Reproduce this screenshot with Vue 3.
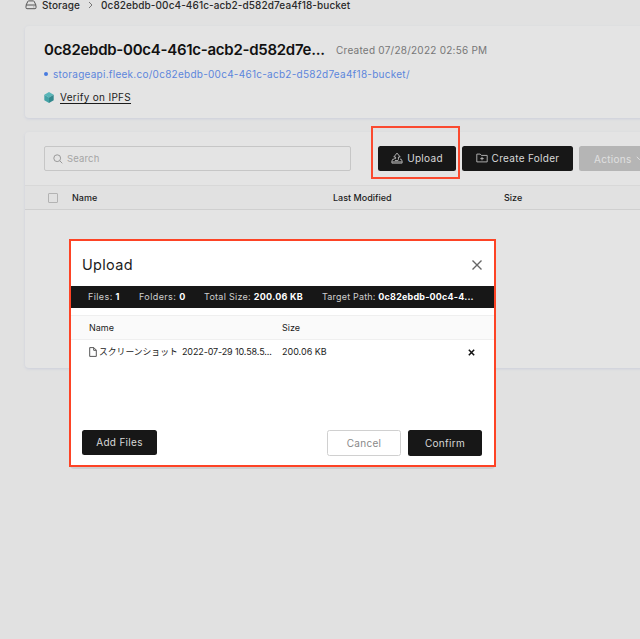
<script setup>
const bucket = '0c82ebdb-00c4-461c-acb2-d582d7ea4f18-bucket'
const stats = [
  { label: 'Files:', value: '1', cls: 'files' },
  { label: 'Folders:', value: '0', cls: 'folders' },
  { label: 'Total Size:', value: '200.06 KB', cls: 'total' },
  { label: 'Target Path:', value: '0c82ebdb-00c4-4...', cls: 'target' },
]
const files = [{ name: 'スクリーンショット', stamp: '2022-07-29 10.58.5...', size: '200.06 KB' }]
</script>

<template>
  <div class="page">
    <nav class="crumbs">
      <svg class="drive" viewBox="0 0 12 10"><path d="M1 5.2 2.9 1.3Q3.1.9 3.6.9h4.8q.5 0 .7.4L11 5.2M2 5h8q1 0 1 1v1.7q0 1-1 1H2q-1 0-1-1V6q0-1 1-1ZM8.6 6.9h.6" /></svg>
      <span class="storage">Storage</span>
      <svg class="sep" viewBox="0 0 5 8"><path d="m1 1 3 3-3 3" /></svg>
      <span class="crumb-name">{{ bucket }}</span>
    </nav>

    <section class="card info">
      <div class="title-row">
        <h1>0c82ebdb-00c4-461c-acb2-d582d7e...</h1>
        <span class="created">Created 07/28/2022 02:56 PM</span>
      </div>
      <div class="url-row"><i class="dot"></i><a class="url">storageapi.fleek.co/{{ bucket }}/</a></div>
      <div class="verify-row">
        <svg class="cube" viewBox="0 0 10 11">
          <path fill="#58b5b8" d="M5 0 9.7 2.7 5 5.4.3 2.7Z" />
          <path fill="#43a2a6" d="M.3 2.7 5 5.4V11L.3 8.2Z" />
          <path fill="#32888d" d="M9.7 2.7 5 5.4V11l4.7-2.8Z" />
        </svg>
        <a class="verify">Verify on IPFS</a>
      </div>
    </section>

    <section class="card listing">
      <div class="toolbar">
        <div class="search">
          <svg viewBox="0 0 10 10"><circle cx="4.2" cy="4.2" r="3.4" /><path d="m6.7 6.7 2.6 2.6" /></svg>
          <span>Search</span>
        </div>
        <button class="btn upload">
          <svg viewBox="0 0 12 12"><path d="M4.6 5H2.8L6 1.1 9.2 5H7.4v2.6q0 1-1.2 1H3.9M4.6 5v1.7H3.2M3 7.2H1.8L.9 9v2.1h10.2V9l-.9-1.8H9M1.2 9.9h9.6" /></svg>
          <span>Upload</span>
        </button>
        <button class="btn create">
          <svg viewBox="0 0 12 10"><path d="M.8 8.9V1.1h3.4l1.2 1.3h5.8v6.5ZM6 3.9v3.4M4.3 5.6h3.4" /></svg>
          <span>Create Folder</span>
        </button>
        <button class="btn actions">
          <span>Actions</span>
          <svg viewBox="0 0 7 5"><path d="m.8.8 2.7 2.8L6.2.8" /></svg>
        </button>
      </div>
      <div class="thead">
        <i class="check"></i>
        <span class="c-name">Name</span>
        <span class="c-mod">Last Modified</span>
        <span class="c-size">Size</span>
      </div>
    </section>

    <div class="mark"></div>

    <div class="modal-shadow"></div>
    <div class="modal">
      <header>
        <h2>Upload</h2>
        <svg viewBox="0 0 10 10"><path d="m.5.5 9 9M9.5.5l-9 9" /></svg>
      </header>
      <div class="stats">
        <span v-for="s in stats" :key="s.cls" :class="s.cls">{{ s.label }} <b>{{ s.value }}</b></span>
      </div>
      <div class="mhead"><span class="m-name">Name</span><span class="m-size">Size</span></div>
      <div v-for="f in files" :key="f.name" class="mrow">
        <div class="m-file">
          <svg viewBox="0 0 8 10"><path d="M.7.6h4.1l2.5 2.5v6.3H.7ZM4.7.8v2.5h2.5" /></svg>
          <span class="jp">{{ f.name }}</span>
          <span class="stamp">{{ f.stamp }}</span>
        </div>
        <span class="m-kb">{{ f.size }}</span>
        <svg class="remove" viewBox="0 0 6 6"><path d="m.7.7 4.6 4.6M5.3.7.7 5.3" /></svg>
      </div>
      <footer>
        <button class="btn add">Add Files</button>
        <button class="btn cancel">Cancel</button>
        <button class="btn confirm">Confirm</button>
      </footer>
    </div>
  </div>
</template>

<style>
body { background: #e1e1e1; }
</style>

<style scoped>
* { box-sizing: border-box; }
.page {
  position: relative;
  width: 640px;
  height: 639px;
  overflow: hidden;
  background: #e1e1e1;
  color: #1c1c1c;
  font-family: Inter, "Noto Sans CJK JP", sans-serif;
  font-size: 9.5px;
  line-height: 12px;
  white-space: nowrap;
}
svg { display: block; flex: none; fill: none; stroke: currentColor; }
.crumbs { display: flex; align-items: center; height: 10px; padding-left: 25px; font-size: 10px; font-weight: 500; color: #2a2a2a; }
.drive { width: 12px; height: 10px; margin-right: 5px; color: #555; }
.storage { width: 46px; letter-spacing: 0.1px; }
.sep { width: 5px; height: 8px; margin-right: 8px; color: #777; }
.crumb-name { letter-spacing: 0.09px; }
.card { width: 640px; margin-left: 25px; background: #e4e4e4; border-radius: 4px; box-shadow: 0 1px 3px #ccd0dc; }
.info { height: 92px; margin-top: 16px; padding: 14px 0 0 19px; }
.title-row { display: flex; align-items: center; height: 20px; }
h1 { width: 292px; margin: 0; font-size: 15px; font-weight: 600; letter-spacing: -0.27px; color: #111; }
.created { font-size: 10px; letter-spacing: 0.24px; color: #777; }
.url-row { display: flex; align-items: center; height: 14px; margin-top: 7px; color: #5c86dc; font-size: 10px; letter-spacing: 0.26px; }
.dot { width: 4px; height: 4px; margin-right: 5px; border-radius: 50%; background: #477be0; }
.verify-row { display: flex; align-items: center; height: 14px; margin-top: 9px; font-size: 10px; letter-spacing: 0.3px; }
.cube { width: 10px; height: 11px; margin-right: 6px; stroke: none; }
.verify { text-decoration: underline; text-underline-offset: 2px; }
.listing { height: 236px; margin-top: 14px; }
.toolbar { display: flex; height: 53px; padding: 14px 0 0 19px; }
.search { display: flex; align-items: center; width: 307px; height: 25px; margin-right: 27px; padding: 1px 0 0 8px; border: 1px solid #c6c6c6; border-radius: 2px; color: #a5a5a5; letter-spacing: 0.15px; }
.search svg { width: 10px; height: 10px; margin-right: 4px; color: #999; }
.btn { display: flex; align-items: center; justify-content: center; height: 25px; margin: 0; padding: 0 0 1px; border: 0; border-radius: 2.5px; background: #171717; color: #d9d9d9; font: 10px/12px Inter, sans-serif; letter-spacing: 0.3px; white-space: nowrap; }
.upload { width: 78px; margin-right: 6px; padding-bottom: 2px; }
.upload svg { width: 12px; height: 12px; margin: 1px 4px 0 0; color: #c0c0c0; stroke-width: .9; }
.create { width: 111px; margin-right: 6px; padding-bottom: 2px; }
.create svg { width: 12px; height: 10px; margin: 1px 4px 0 0; color: #bbb; stroke-width: .9; }
.actions { justify-content: flex-start; width: 85px; padding: 0 0 0 15px; background: #b5b5b5; color: #e0e0e0; }
.actions svg { width: 7px; height: 5px; margin-left: 4px; }
.thead { display: flex; align-items: center; height: 25px; padding-left: 23px; border-top: 1px solid #d8d8d8; border-bottom: 1px solid #cfcfcf; background: #e1e1e1; font-size: 9px; font-weight: 500; }
.check { width: 10px; height: 10px; margin-right: 14px; border: 1px solid #b3b3b3; border-radius: 1px; }
.c-name { width: 261px; }
.c-mod { width: 171px; }
.mark { position: absolute; left: 371px; top: 126px; width: 89px; height: 53px; border: 2px solid #fb4a2f; }
.modal-shadow { position: absolute; left: 70px; top: 455px; width: 425px; height: 14px; border-radius: 4px; background: #cecece; }
.modal { position: absolute; left: 69px; top: 239px; width: 427px; height: 228px; border: 2px solid #fd4325; background: #fff; }
header { display: flex; align-items: center; justify-content: space-between; height: 45px; padding: 3px 12px 0 11px; }
h2 { margin: 0; font-size: 14.5px; font-weight: 400; line-height: 18px; letter-spacing: 0.3px; }
header svg { width: 10px; height: 10px; color: #666; stroke-width: 1.4; }
.stats { display: flex; align-items: center; height: 22px; padding: 0 0 1px 17px; background: #171717; color: #cfcfcf; font-size: 9px; letter-spacing: 0.28px; }
.stats b { color: #fff; font-weight: 700; }
.files { width: 51px; letter-spacing: 0.4px; }
.folders { width: 65px; letter-spacing: 0.4px; }
.total { width: 118px; }
.target { letter-spacing: 0.19px; }
.mhead { display: flex; align-items: center; height: 25px; margin-top: 7px; padding-left: 18px; border-top: 1px solid #efefef; border-bottom: 1px solid #efefef; background: #fafafa; font-size: 9px; }
.m-name { width: 193px; }
.mrow { display: flex; align-items: center; height: 24px; padding-left: 18px; font-size: 9px; }
.m-file { display: flex; align-items: center; width: 193px; }
.m-file svg { width: 8px; height: 10px; margin-right: 2px; color: #444; stroke-width: .9; }
.jp { width: 83px; font-size: 8.8px; }
.stamp { letter-spacing: -0.12px; }
.m-kb { width: 186px; }
.remove { width: 7px; height: 7px; color: #111; stroke-width: 1.3; }
footer { display: flex; height: 27px; margin-top: 66px; padding-left: 11px; }
.add { width: 75px; margin-right: 170px; }
.cancel { width: 74px; height: 26px; margin-right: 7px; border: 1px solid #d0d0d0; background: #fff; color: #888; }
.confirm { width: 74px; height: 26px; }
</style>
